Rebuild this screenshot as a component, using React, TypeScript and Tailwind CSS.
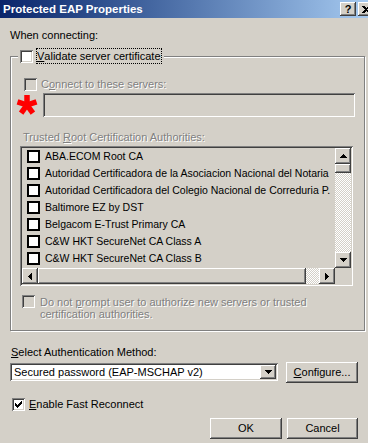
import React from "react";

const raised =
  "shadow-[inset_-1px_-1px_#404040,inset_1px_1px_#ffffff,inset_-2px_-2px_#808080,inset_2px_2px_#d4d0c8]";
const sunken =
  "shadow-[inset_1px_1px_#808080,inset_-1px_-1px_#ffffff,inset_2px_2px_#404040,inset_-2px_-2px_#d4d0c8]";
const grayText = "text-[#808080] [text-shadow:1px_1px_0_#ffffff]";
const dither =
  "bg-[image:repeating-conic-gradient(#d4d0c8_0_25%,#ffffff_0_50%)] bg-size-[2px_2px]";

const certs = [
  "ABA.ECOM Root CA",
  "Autoridad Certificadora de la Asociacion Nacional del Notaria",
  "Autoridad Certificadora del Colegio Nacional de Correduria P.",
  "Baltimore EZ by DST",
  "Belgacom E-Trust Primary CA",
  "C&W HKT SecureNet CA Class A",
  "C&W HKT SecureNet CA Class B",
];

function Arrow({ dir }: { dir: "up" | "down" | "left" | "right" }) {
  const vertical = dir === "up" || dir === "down";
  const d = {
    up: "M3 0h1v1h1v1h1v1h1v1H0V3h1V2h1V1h1z",
    down: "M0 0h7v1H6v1H5v1H4v1H3V3H2V2H1V1H0z",
    left: "M3 0h1v7H3V6H2V5H1V4H0V3h1V2h1V1h1z",
    right: "M0 0h1v1h1v1h1v1h1v1H3v1H2v1H1v1H0z",
  }[dir];
  return (
    <svg
      width={vertical ? 7 : 4}
      height={vertical ? 4 : 7}
      viewBox={vertical ? "0 0 7 4" : "0 0 4 7"}
      shapeRendering="crispEdges"
    >
      <path d={d} fill="#000" />
    </svg>
  );
}

function Check({ checked = false, disabled = false }: { checked?: boolean; disabled?: boolean }) {
  return (
    <span
      className={`relative block w-[13px] h-[13px] shrink-0 ${sunken} ${
        disabled ? "bg-[#d4d0c8]" : "bg-white"
      }`}
    >
      {checked && (
        <svg className="absolute inset-0" width="13" height="13" viewBox="0 0 13 13" shapeRendering="crispEdges">
          <path d="M3 5L5 7L10 2V5L5 10L3 8Z" fill="#000" />
        </svg>
      )}
    </span>
  );
}

function Button({ children, w = "w-[72px]" }: { children: React.ReactNode; w?: string }) {
  return (
    <div className={`${w} h-[21px] bg-[#d4d0c8] ${raised} flex items-center justify-center`}>
      {children}
    </div>
  );
}

function TitleBar() {
  return (
    <div className="h-[18px] flex items-center bg-linear-to-r from-[#0a246a] to-[#a6caf0] overflow-hidden">
      <span className="pl-[3px] text-white font-bold text-[11.5px]">Protected EAP Properties</span>
      <div className="ml-auto mr-[-6px] flex gap-[2px]">
        <div className={`w-[16px] h-[14px] bg-[#d4d0c8] ${raised} flex items-center justify-center font-bold text-[11px] leading-none`}>
          ?
        </div>
        <div className={`w-[16px] h-[14px] bg-[#d4d0c8] ${raised} flex items-center justify-center`}>
          <svg width="8" height="7" viewBox="0 0 8 7" shapeRendering="crispEdges">
            <path d="M0 0h2l2 2 2-2h2L5 3.5 8 7H6L4 5 2 7H0l3-3.5z" fill="#000" />
          </svg>
        </div>
      </div>
    </div>
  );
}

function CertList() {
  return (
    <div className={`ml-[9px] mt-[2px] w-[333px] h-[140px] p-[2px] ${sunken} flex flex-col`}>
      <div className="flex h-[120px]">
        <div className="flex-1 overflow-hidden text-[10.5px]">
          {certs.map((c) => (
            <div key={c} className="flex items-center h-[17px] pl-[5px] whitespace-nowrap">
              <span className="block w-[13px] h-[13px] shrink-0 border-2 border-black bg-white" />
              <span className="ml-[5px]">{c}</span>
            </div>
          ))}
        </div>
        <div className="w-[16px] flex flex-col">
          <div className={`h-[16px] bg-[#d4d0c8] ${raised} flex items-center justify-center`}>
            <Arrow dir="up" />
          </div>
          <div className={`h-[9px] bg-[#d4d0c8] ${raised}`} />
          <div className={`flex-1 ${dither}`} />
          <div className={`h-[16px] bg-[#d4d0c8] ${raised} flex items-center justify-center`}>
            <Arrow dir="down" />
          </div>
        </div>
      </div>
      <div className="flex h-[16px]">
        <div className={`w-[16px] bg-[#d4d0c8] ${raised} flex items-center justify-center`}>
          <Arrow dir="left" />
        </div>
        <div className={`w-[268px] bg-[#d4d0c8] ${raised}`} />
        <div className={`flex-1 ${dither}`} />
        <div className={`w-[16px] bg-[#d4d0c8] ${raised} flex items-center justify-center`}>
          <Arrow dir="right" />
        </div>
        <div className="w-[16px] bg-[#d4d0c8]" />
      </div>
    </div>
  );
}

export default function App() {
  return (
    <div className="w-[368px] h-[443px] overflow-hidden bg-[#d4d0c8] text-[11px] leading-[13px] text-black font-['Liberation_Sans',Arial,sans-serif]">
      <TitleBar />
      <div className="pl-[10px] pt-[11px]">When connecting:</div>

      {/* server certificate group */}
      <div className="relative ml-[10px] mt-[14px] w-[355px] h-[275px] border border-[#808080] shadow-[inset_1px_1px_#ffffff,1px_1px_#ffffff]">
        <div className="absolute left-[7px] top-[-9px] px-[2px] bg-[#d4d0c8] flex items-center h-[16px]">
          <Check />
          <span className="ml-[3px] px-[1px] h-[16px] flex items-center outline outline-dotted outline-black outline-offset-[-1px]">
            <span className="underline">V</span>alidate server certificate
          </span>
        </div>

        <div className="flex items-center ml-[13px] mt-[21px] h-[13px]">
          <Check disabled />
          <span className={`ml-[4px] ${grayText}`}>
            C<span className="underline">o</span>nnect to these servers:
          </span>
        </div>

        <div className="flex items-center mt-[2px] ml-[5px] h-[24px]">
          <svg width="22" height="22" viewBox="0 0 22 22">
            <g stroke="#ff0000" strokeWidth="5.5" strokeLinecap="butt">
              <line x1="11" y1="11" x2="11" y2="1" />
              <line x1="11" y1="11" x2="20.5" y2="7.9" />
              <line x1="11" y1="11" x2="16.9" y2="19.1" />
              <line x1="11" y1="11" x2="5.1" y2="19.1" />
              <line x1="11" y1="11" x2="1.5" y2="7.9" />
            </g>
          </svg>
          <div className={`ml-[5px] w-[312px] h-[24px] bg-[#d4d0c8] ${sunken}`} />
        </div>

        <div className={`ml-[12px] mt-[14px] ${grayText}`}>
          Trusted <span className="underline">R</span>oot Certification Authorities:
        </div>

        <CertList />

        <div className="flex ml-[11px] mt-[9px]">
          <Check disabled />
          <span className={`ml-[5px] mt-[1px] leading-[12px] ${grayText}`}>
            Do not <span className="underline">p</span>rompt user to authorize new servers or trusted
            <br />
            certification authorities.
          </span>
        </div>
      </div>

      <div className="pl-[11px] mt-[15px]">
        <span className="underline">S</span>elect Authentication Method:
      </div>

      <div className="flex items-center ml-[10px] mt-[3px] h-[20px]">
        <div className={`w-[268px] h-[18px] bg-white ${sunken} p-[2px] flex items-center`}>
          <span className="flex-1 pl-[2px] whitespace-nowrap">Secured password (EAP-MSCHAP v2)</span>
          <span className={`w-[16px] h-[14px] bg-[#d4d0c8] ${raised} flex items-center justify-center`}>
            <Arrow dir="down" />
          </span>
        </div>
        <div className="ml-[8px]">
          <Button>
            <span>
              <span className="underline">C</span>onfigure...
            </span>
          </Button>
        </div>
      </div>

      <div className="flex items-center ml-[12px] mt-[16px] h-[13px]">
        <Check checked />
        <span className="ml-[4px]">
          <span className="underline">E</span>nable Fast Reconnect
        </span>
      </div>

      <div className="flex justify-end gap-[5px] pr-[10px] mt-[7px]">
        <Button>OK</Button>
        <Button w="w-[71px]">Cancel</Button>
      </div>
    </div>
  );
}
